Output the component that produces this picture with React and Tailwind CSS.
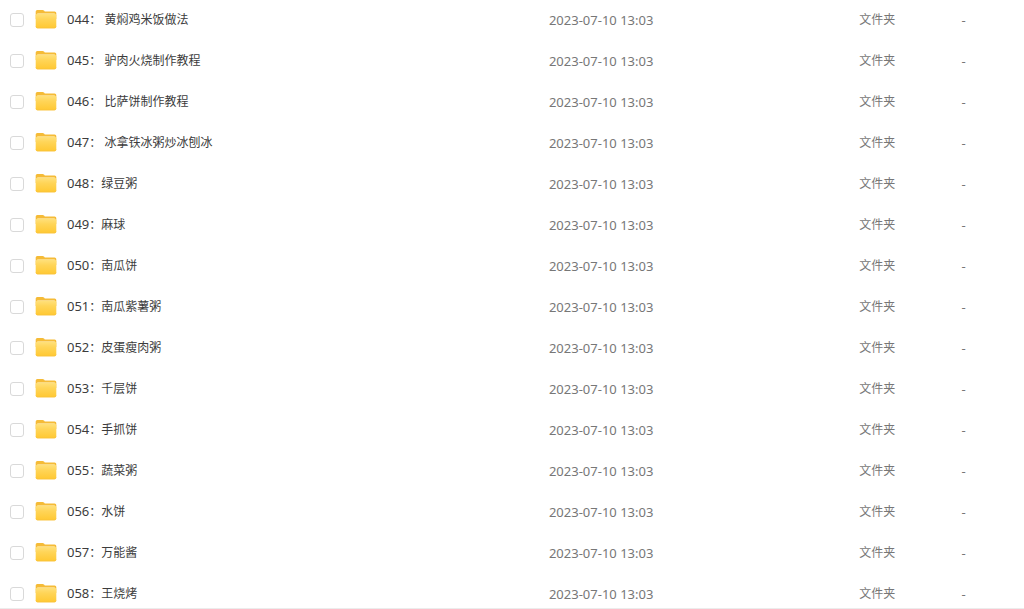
import React, { useState } from 'react';

const FILES = [
  { no: '044', name: ' 黄焖鸡米饭做法' },
  { no: '045', name: ' 驴肉火烧制作教程' },
  { no: '046', name: ' 比萨饼制作教程' },
  { no: '047', name: ' 冰拿铁冰粥炒冰刨冰' },
  { no: '048', name: '绿豆粥' },
  { no: '049', name: '麻球' },
  { no: '050', name: '南瓜饼' },
  { no: '051', name: '南瓜紫薯粥' },
  { no: '052', name: '皮蛋瘦肉粥' },
  { no: '053', name: '千层饼' },
  { no: '054', name: '手抓饼' },
  { no: '055', name: '蔬菜粥' },
  { no: '056', name: '水饼' },
  { no: '057', name: '万能酱' },
  { no: '058', name: '王烧烤' },
];

function FolderIcon() {
  return (
    <svg width="22" height="22" viewBox="0 0 22 22" className="block shrink-0" aria-hidden="true">
      <defs>
        <linearGradient id="folder-front" x1="0" y1="0" x2="0" y2="1">
          <stop offset="0" stopColor="#ffe07a" />
          <stop offset=".35" stopColor="#ffd558" />
          <stop offset="1" stopColor="#ffc832" />
        </linearGradient>
      </defs>
      <path d="M.7 2.6Q.7 1 2.3 1H7.6q.8 0 1.4.6l.8.9H19.6q1.7 0 1.7 1.6V10H.7z" fill="#f5bb37" />
      <path d="M2.2 4.4H19.8V8H2.2z" fill="#fff0b8" />
      <path d="M.7 6.3Q.7 5 2.1 5H19.9q1.4 0 1.4 1.3V17.6q0 1.7-1.7 1.7H2.4Q.7 19.3.7 17.6z" fill="url(#folder-front)" />
      <path d="M1 17.6Q1.2 19 2.6 19H19.4q1.4 0 1.6-1.4" fill="none" stroke="#f7bf3c" strokeWidth=".6" />
    </svg>
  );
}

function FileRow({ file, checked, onToggle }) {
  const id = `file-${file.no}`;

  return (
    <tr className="h-[41px]">
      <td className="pl-[10px]">
        <input
          id={id}
          type="checkbox"
          checked={checked}
          onChange={onToggle}
          className="block size-[14px] appearance-none rounded-[3px] border border-[#d9d9d9] bg-white checked:border-[#06a7ff] checked:bg-[#06a7ff]"
        />
      </td>
      <td>
        <div className="flex items-center gap-[10px]">
          <FolderIcon />
          <label htmlFor={id} className="whitespace-pre text-[12px] leading-5 text-[#3c3c3c]">
            <span className="text-[13px]">{file.no}</span>：{file.name}
          </label>
        </div>
      </td>
      <td className="text-[13px] leading-5">2023-07-10 13:03</td>
      <td className="text-[12px] leading-5">文件夹</td>
      <td className="text-[13px] leading-5">-</td>
    </tr>
  );
}

export default function App() {
  const [selected, setSelected] = useState([]);

  const toggle = (no) => {
    setSelected(selected.includes(no) ? selected.filter((n) => n !== no) : [...selected, no]);
  };

  return (
    <main
      lang="zh-CN"
      className="h-screen overflow-hidden border-b border-[#ececec] bg-white font-['Noto_Sans','Noto_Sans_CJK_SC',sans-serif] text-[#777]"
    >
      <table className="-mt-px w-full table-fixed border-collapse text-left">
        <colgroup>
          <col className="w-[35px]" />
          <col />
          <col className="w-[30.3%]" />
          <col className="w-[10%]" />
          <col className="w-[6.1%]" />
        </colgroup>
        <tbody>
          {FILES.map((file) => (
            <FileRow
              key={file.no}
              file={file}
              checked={selected.includes(file.no)}
              onToggle={() => toggle(file.no)}
            />
          ))}
        </tbody>
      </table>
    </main>
  );
}
